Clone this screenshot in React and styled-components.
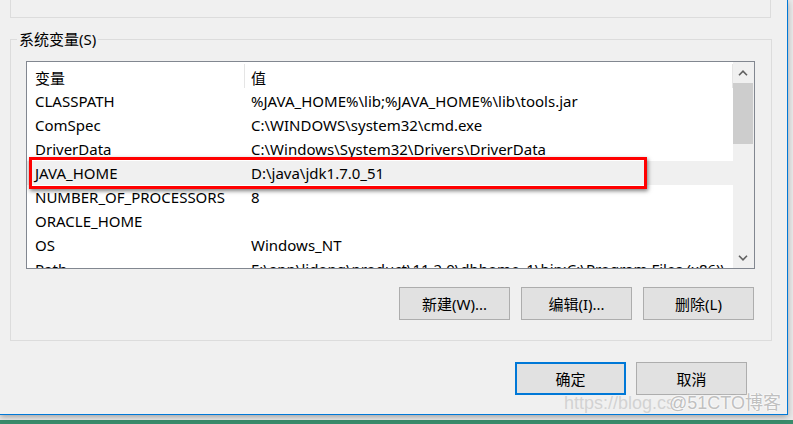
import styled, { createGlobalStyle } from "styled-components";

const GlobalStyle = createGlobalStyle`
  html, body {
    margin: 0;
    padding: 0;
    background: #f0f0f0;
  }
  * {
    box-sizing: border-box;
  }
`;

const FONT = `"Noto Sans", "Noto Sans CJK SC", sans-serif`;

const Screen = styled.div`
  width: 793px;
  height: 424px;
  overflow: hidden;
  background: linear-gradient(to bottom, #e9e9e9 0, #e9e9e9 420px, #3a8c6c 420px);
  font-family: ${FONT};
  font-size: 15px;
  color: #000;
`;

const Window = styled.div`
  width: 788px;
  height: 415px;
  background: #f0f0f0;
  border-right: 1px solid #0078d7;
  border-bottom: 1px solid #0078d7;
  box-shadow: 0 2px 6px rgba(0, 0, 0, 0.3);
  display: flex;
  flex-direction: column;
  position: relative;
`;

const TopPanel = styled.div`
  margin-left: 10px;
  width: 761px;
  height: 18px;
  border: 1px solid #dcdcdc;
  border-top: none;
`;

const Group = styled.fieldset`
  margin: 11px 0 0 10px;
  width: 761px;
  height: 312px;
  border: 1px solid #dcdcdc;
  padding: 0 16px 0 15px;
  display: flex;
  flex-direction: column;
`;

const Legend = styled.legend`
  padding: 0 2px;
  margin-left: -9px;
  line-height: 20px;
  font-size: 15px;
`;

const ListView = styled.div`
  margin-top: 12px;
  width: 729px;
  height: 208px;
  border: 1px solid #828790;
  background: #fff;
  display: flex;
  overflow: hidden;
`;

const ListBody = styled.div`
  flex: 1;
  display: flex;
  flex-direction: column;
  overflow: hidden;
`;

const Header = styled.div`
  display: flex;
  height: 27px;
  flex-shrink: 0;
  align-items: center;
  padding-top: 3px;
`;

const HeaderCell = styled.div`
  width: ${(p) => p.$width}px;
  height: 100%;
  display: flex;
  align-items: center;
  padding-left: ${(p) => p.$pad}px;
  border-right: 1px solid #e5e5e5;
  margin-top: -3px;
  padding-top: 3px;
`;

const Row = styled.div`
  position: relative;
  display: flex;
  align-items: center;
  height: 24px;
  flex-shrink: 0;
  background: ${(p) => (p.$selected ? "#f0f0f0" : "transparent")};
  white-space: nowrap;
`;

const Cell = styled.div`
  width: ${(p) => (p.$width ? `${p.$width}px` : "auto")};
  flex-shrink: 0;
  padding-left: ${(p) => p.$pad}px;
`;

const Callout = styled.div`
  position: absolute;
  left: 2px;
  top: -4px;
  width: 618px;
  height: 32px;
  border: 3px solid #ff0000;
  box-shadow: 1px 2px 4px rgba(0, 0, 0, 0.5);
  pointer-events: none;
`;

const ScrollBar = styled.div`
  width: 21px;
  background: #f0f0f0;
  display: flex;
  flex-direction: column;
`;

const ScrollArrow = styled.div`
  height: 21px;
  display: flex;
  align-items: center;
  justify-content: center;
  padding-right: 1px;
`;

const ScrollThumb = styled.div`
  height: 61px;
  margin: 0 1px 0 0;
  background: #cdcdcd;
`;

const ScrollTrack = styled.div`
  flex: 1;
`;

const ButtonRow = styled.div`
  display: flex;
  justify-content: flex-end;
  gap: ${(p) => p.$gap}px;
  margin-top: ${(p) => p.$top}px;
  padding-right: ${(p) => p.$right}px;
`;

const Button = styled.div`
  width: 111px;
  height: 33px;
  background: #e1e1e1;
  border: ${(p) => (p.$primary ? "2px solid #0078d7" : "1px solid #adadad")};
  display: flex;
  align-items: center;
  justify-content: center;
  font-size: 15px;
`;

const Watermark = styled.div`
  position: absolute;
  right: 6px;
  bottom: 0;
  display: flex;
  align-items: baseline;
  font-family: "Liberation Sans", "Noto Sans CJK SC", sans-serif;
  font-size: 18px;
  pointer-events: none;
`;

const WatermarkUrl = styled.span`
  color: rgba(205, 205, 205, 0.85);
`;

const WatermarkBrand = styled.span`
  margin-left: -6px;
  color: rgba(175, 175, 175, 0.8);
  text-shadow: 0 0 2px #fff, 0 0 2px #fff;
`;

const Chevron = ({ up }) => (
  <svg width="10" height="6" viewBox="0 0 10 6">
    <path
      d={up ? "M1 5.2 L5 1.2 L9 5.2" : "M1 0.8 L5 4.8 L9 0.8"}
      fill="none"
      stroke="#606060"
      strokeWidth="1.6"
    />
  </svg>
);

const rows = [
  ["CLASSPATH", "%JAVA_HOME%\\lib;%JAVA_HOME%\\lib\\tools.jar"],
  ["ComSpec", "C:\\WINDOWS\\system32\\cmd.exe"],
  ["DriverData", "C:\\Windows\\System32\\Drivers\\DriverData"],
  ["JAVA_HOME", "D:\\java\\jdk1.7.0_51", true],
  ["NUMBER_OF_PROCESSORS", "8"],
  ["ORACLE_HOME", ""],
  ["OS", "Windows_NT"],
  ["Path", "E:\\app\\lidong\\product\\11.2.0\\dbhome_1\\bin;C:\\Program Files (x86)\\"],
];

export default function App() {
  return (
    <Screen>
      <GlobalStyle />
      <Window>
        <TopPanel />
        <Group>
          <Legend>系统变量(S)</Legend>
          <ListView>
            <ListBody>
              <Header>
                <HeaderCell $width={218} $pad={8}>变量</HeaderCell>
                <HeaderCell $width={488} $pad={6}>值</HeaderCell>
              </Header>
              {rows.map(([name, value, selected]) => (
                <Row key={name} $selected={selected}>
                  <Cell $width={218} $pad={8}>{name}</Cell>
                  <Cell $pad={6}>{value}</Cell>
                  {selected && <Callout />}
                </Row>
              ))}
            </ListBody>
            <ScrollBar>
              <ScrollArrow>
                <Chevron up />
              </ScrollArrow>
              <ScrollThumb />
              <ScrollTrack />
              <ScrollArrow>
                <Chevron />
              </ScrollArrow>
            </ScrollBar>
          </ListView>
          <ButtonRow $gap={11} $top={18} $right={1}>
            <Button>新建(W)...</Button>
            <Button>编辑(I)...</Button>
            <Button>删除(L)</Button>
          </ButtonRow>
        </Group>
        <ButtonRow $gap={10} $top={21} $right={40}>
          <Button $primary>确定</Button>
          <Button>取消</Button>
        </ButtonRow>
        <Watermark>
          <WatermarkUrl>https://blog.cs</WatermarkUrl>
          <WatermarkBrand>@51CTO博客</WatermarkBrand>
        </Watermark>
      </Window>
    </Screen>
  );
}
